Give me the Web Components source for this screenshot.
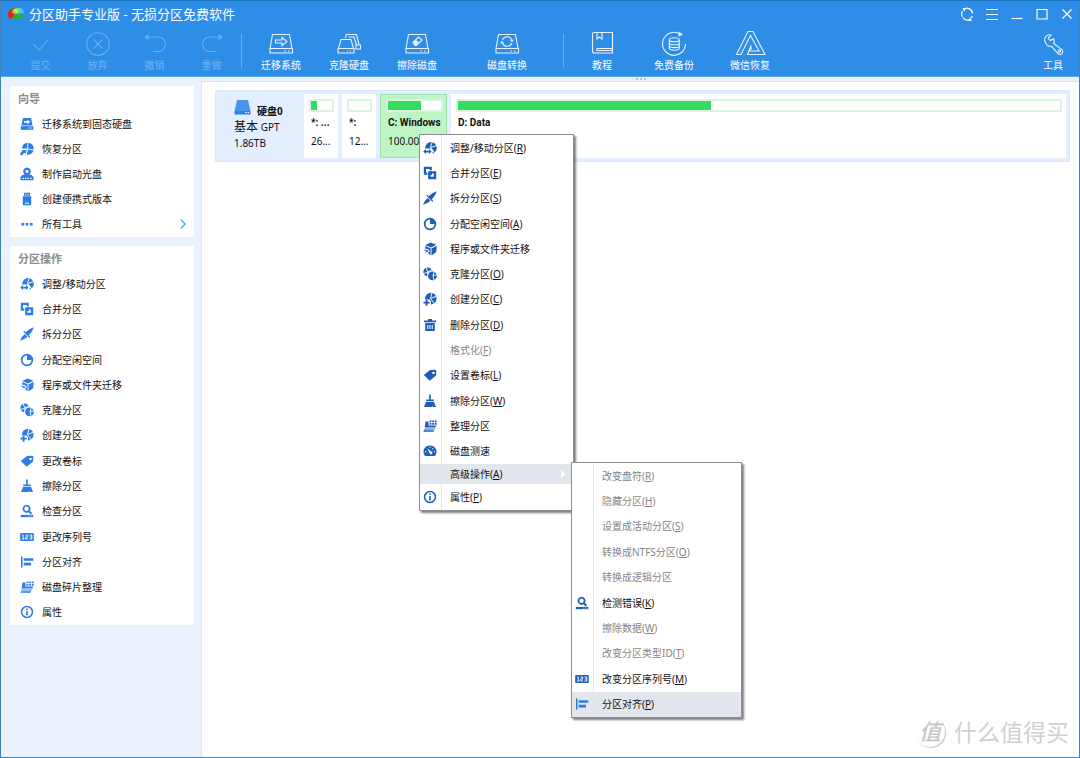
<!DOCTYPE html>
<html lang="zh-CN">
<head>
<meta charset="utf-8">
<title>分区助手专业版</title>
<style>
  html, body { margin: 0; height: 100%; }
  body { font: 10px/16px "Noto Sans", "Noto Sans CJK SC", sans-serif; color: #111; background: #fff; }
</style>
</head>
<body>

<app-window>
  <title-bar slot="header">分区助手专业版 - 无损分区免费软件</title-bar>
  <tool-bar slot="header">
    <tool-group>
      <tool-button icon="commit" dim>提交</tool-button>
      <tool-button icon="discard" dim>放弃</tool-button>
      <tool-button icon="undo" dim>撤销</tool-button>
      <tool-button icon="redo" dim>重做</tool-button>
    </tool-group>
    <tool-group wide>
      <tool-button icon="osmigrate">迁移系统</tool-button>
      <tool-button icon="diskclone">克隆硬盘</tool-button>
      <tool-button icon="diskwipe">擦除磁盘</tool-button>
      <tool-button icon="diskconvert" size="xl">磁盘转换</tool-button>
    </tool-group>
    <tool-group wider>
      <tool-button icon="book">教程</tool-button>
      <tool-button icon="backup">免费备份</tool-button>
      <tool-button icon="wechat" size="lg">微信恢复</tool-button>
    </tool-group>
    <tool-button slot="end" icon="wrench">工具</tool-button>
  </tool-bar>

  <side-card slot="side" heading="向导" size="short">
    <side-item icon="migrate">迁移系统到固态硬盘</side-item>
    <side-item icon="recover">恢复分区</side-item>
    <side-item icon="bootdisc">制作启动光盘</side-item>
    <side-item icon="portable">创建便携式版本</side-item>
    <side-item icon="dots" more>所有工具</side-item>
  </side-card>
  <side-card slot="side" heading="分区操作" size="tall">
    <side-item icon="resize">调整/移动分区</side-item>
    <side-item icon="merge">合并分区</side-item>
    <side-item icon="split">拆分分区</side-item>
    <side-item icon="alloc">分配空闲空间</side-item>
    <side-item icon="box">程序或文件夹迁移</side-item>
    <side-item icon="clone">克隆分区</side-item>
    <side-item icon="create">创建分区</side-item>
    <side-item icon="tag">更改卷标</side-item>
    <side-item icon="wipe">擦除分区</side-item>
    <side-item icon="check">检查分区</side-item>
    <side-item icon="serial">更改序列号</side-item>
    <side-item icon="align">分区对齐</side-item>
    <side-item icon="defrag">磁盘碎片整理</side-item>
    <side-item icon="info">属性</side-item>
  </side-card>

  <disk-row name="硬盘0" kind="基本" table="GPT" size="1.86TB">
    <disk-part used="30" size="26...">*: ...</disk-part>
    <disk-part used="0" size="12...">*:</disk-part>
    <disk-part used="62" size="100.00GB" selected>C: Windows</disk-part>
    <disk-part used="42" size="" grow>D: Data</disk-part>
  </disk-row>

  <pop-menu slot="overlay" id="context" aria-label="分区菜单">
    <menu-row icon="resize">调整/移动分区(<u>R</u>)</menu-row>
    <menu-row icon="merge">合并分区(<u>E</u>)</menu-row>
    <menu-row icon="split">拆分分区(<u>S</u>)</menu-row>
    <menu-row icon="alloc">分配空闲空间(<u>A</u>)</menu-row>
    <menu-row icon="box">程序或文件夹迁移</menu-row>
    <menu-row icon="clone">克隆分区(<u>O</u>)</menu-row>
    <menu-row icon="create">创建分区(<u>C</u>)</menu-row>
    <menu-row icon="trash">删除分区(<u>D</u>)</menu-row>
    <menu-row disabled>格式化(<u>F</u>)</menu-row>
    <menu-row icon="tag">设置卷标(<u>L</u>)</menu-row>
    <menu-row icon="wipe">擦除分区(<u>W</u>)</menu-row>
    <menu-row icon="defrag">整理分区</menu-row>
    <menu-row icon="gauge">磁盘测速</menu-row>
    <menu-row slot="foot" active sub>高级操作(<u>A</u>)</menu-row>
    <menu-row slot="foot" icon="info">属性(<u>P</u>)</menu-row>
  </pop-menu>
  <pop-menu slot="overlay" id="advanced" aria-label="高级操作">
    <menu-row disabled>改变盘符(<u>R</u>)</menu-row>
    <menu-row disabled>隐藏分区(<u>H</u>)</menu-row>
    <menu-row disabled>设置成活动分区(<u>S</u>)</menu-row>
    <menu-row disabled>转换成NTFS分区(<u>O</u>)</menu-row>
    <menu-row disabled>转换成逻辑分区</menu-row>
    <menu-row icon="check">检测错误(<u>K</u>)</menu-row>
    <menu-row disabled>擦除数据(<u>W</u>)</menu-row>
    <menu-row disabled>改变分区类型ID(<u>T</u>)</menu-row>
    <menu-row icon="serial">改变分区序列号(<u>M</u>)</menu-row>
    <menu-row icon="align" bright active>分区对齐(<u>P</u>)</menu-row>
  </pop-menu>
  <site-mark slot="overlay" badge="值">什么值得买</site-mark>
</app-window>

<script>
/* Filled 14px glyphs; class "k" knocks a shape out, class "l" cuts a line, both in the background colour. */
const SMALL = {
  migrate: '<path d="M3 1h8l1.6 7.4H1.4z"/><path d="M.7 9.200h12.600v3.600H.7z"/><path class="k" d="M4 4h3.200V2.600L10.400 5 7.200 7.200V5.800H4zM8.400 10.600h1.200v1H8.400zM10.600 10.600h1.200v1h-1.200z"/>',
  recover: '<circle cx="7.800" cy="6.800" r="6"/><path class="l" d="M7.800.5V7L14 8M7.800 7L6 13M7.800 7H1"/><path class="k" d="M0 6.800h6.500v6L5 14H0z"/><path d="M.5 13.200v-2.400l2.200-2L1.500 8h4.300v4.300l-1.400-1.600-1.800 1.800v.7z"/>',
  bootdisc: '<path fill-rule="evenodd" d="M7 .5a3.900 3.900 0 0 1 2.600 6.800L11 9H3l1.400-1.700A3.900 3.900 0 0 1 7 .5zm0 2.300a1.600 1.600 0 1 0 0 3.200 1.600 1.600 0 0 0 0-3.200z"/><path d="M2.200 8h9.600l1.700 2v3.300H.5V10z"/><path class="k" d="M2.500 10.800h1.400V12H2.500zM5 10.800h1.400V12H5zM7.600 10.800H9V12H7.600zM10.200 10.800h1.400V12h-1.400z"/>',
  portable: '<path d="M4 .8h6v3H4zM2.800 4.300h8.400v8q0 1-1 1H3.800q-1 0-1-1z"/><path class="k" d="M5.300 2h1v1h-1zM7.700 2h1v1h-1zM5 10.800h4v.9H5z"/>',
  dots: '<path d="M1.500 6h2.700v2.500H1.500zM5.700 6h2.700v2.500H5.700zM9.900 6h2.700v2.500H9.900z"/>',
  resize: '<circle cx="8" cy="6.800" r="5.800"/><path class="l" d="M7.500 6.500L9.300.5M7.500 6.500L13.500 4.800M7.500 6.500L12 12"/><path class="k" d="M0 7.500h8.800l1.500 3L8.500 14H0z"/><path d="M.2 10.600l2.700-2.500v1.700h3V8.100l2.700 2.500-2.700 2.500v-1.700h-3v1.700z"/>',
  merge: '<path fill-rule="evenodd" d="M.8.8h8v8h-8zM3 3v3.600h3.600V3z"/><path class="k" d="M4.300 4.300h5.300v1H5.300v4.300h-1z"/><path fill-rule="evenodd" d="M5.200 5.200h8v8h-8zM7.600 7.600v3.200h3.200V7.600z"/><path d="M6.600 6.600h2.200v2.200H6.600z"/>',
  split: '<path d="M13.900.3Q8.500 1.800 5.300 5.500l3.200 3.300Q12 5.500 13.900.3z"/><path d="M4.800 7l2.700 2.700Q4 12.800 0 13.700 1.500 9.500 4.800 7z"/><path d="M3.200 4.600l1.300-.5 5.600 5.700-.5 1.300z"/>',
  alloc: '<path fill-rule="evenodd" d="M7 .8a6.200 6.200 0 1 0 0 12.400A6.200 6.200 0 0 0 7 .8zm0 1.700V7h4.500A4.500 4.500 0 1 1 7 2.500z"/>',
  box: '<path d="M2.200 3L7.700.6l5.600 2.100L8 5.400zM8.500 6.400l5.200-2.700-.4 6.200-4.800 3.500zM7.600 6.300L2.200 4.100v2.700l2.900.3 1.700 2.500-2 1.400 2.800 2.200zM.2 7.700l4.200.2L5.700 10l-1.900-.3-1.700 1.900 1.100-2.300z"/>',
  clone: '<circle cx="4.800" cy="4.900" r="4.500"/><path class="l" d="M4.800 5.200L3 0M4.800 5.200L9 2.500M4.800 5.200L0 6.800M4.800 5.200L5 10"/><circle class="k" cx="9.400" cy="8.800" r="5.200"/><circle cx="9.500" cy="8.900" r="4.400"/><path class="l" d="M14 7.800L10 8.500 11.500 4M10 8.500L11 13.500"/>',
  create: '<circle cx="7.800" cy="6.600" r="5.800"/><path class="l" d="M7.500 6.500L9 .5M7.500 6.500L13.300 4.300M7.500 6.500L11.500 12"/><path class="k" d="M0 7.600h6.800l1.200 2V14H0z"/><path d="M2.600 7.700h1.900v2h2.200v1.800H4.500v2.200H2.600v-2.200H.4V9.700h2.200z"/>',
  tag: '<path fill-rule="evenodd" d="M7 2l5-.2q1.500 0 1.400 1.500L13 7.500l-6.300 5.300L.8 7.100zm3.500 1.700a1.200 1.200 0 1 0 0 2.400 1.200 1.200 0 0 0 0-2.400z"/>',
  wipe: '<path d="M6.200.5h1.600v5h3v1.700H3.200V5.500h3zM3 8h8l2 5H9.600l-.4-1.600-.4 1.600H1z"/>',
  check: '<path fill-rule="evenodd" d="M6.500.8a4 4 0 0 1 3.400 6.100l2.300 2.200-1.500 1.300L8.500 8.300A4 4 0 1 1 6.500.8zm0 1.800a2.200 2.200 0 1 0 0 4.400 2.200 2.200 0 0 0 0-4.400z"/><path d="M.8 10.900h12.400v2.300H.8z"/><path class="k" d="M8.300 11.700h1v.8h-1zM10.500 11.700h1v.8h-1z"/>',
  serial: '<path d="M1.200 3h11.600q1 0 1 1v6q0 1-1 1H1.200q-1 0-1-1V4q0-1 1-1z"/><path class="l" d="M2 5h1.200v4M2 9h2.400M5.500 5h2.200v2H5.700v2h2.300M9.500 5h2.300v4H9.500M9.700 7h2"/>',
  align: '<path d="M1 1.500h1.500v11H1zM3.700 3.200h9.600v2.500H3.700zM3.700 7.800H11v2.600H3.700z"/>',
  defrag: '<path d="M2.500 2.500h3v4H13l-.4 2H1.700zM1.500 9.400h10.800l-.6 1.100H1.100zM.8 11.200h10.300l-.6 1.500H.4zM6.500 1.500h1.900v1.700H6.500zM9.200 1.500h1.900v1.700H9.200zM11.900 1.500h1.800v1.700h-1.800zM6.500 4h1.900v1.700H6.500zM9.200 4h1.900v1.700H9.200zM11.900 4h1.800v1.700h-1.800z"/>',
  info: '<path fill-rule="evenodd" d="M7 .8a6.200 6.200 0 1 0 0 12.400A6.200 6.200 0 0 0 7 .8zm0 1.500a4.700 4.700 0 1 1 0 9.400 4.700 4.700 0 0 1 0-9.400z"/><path d="M6.200 3.500h1.600V5H6.200zM6.200 5.900h1.600v4.600H6.200z"/>',
  trash: '<path fill-rule="evenodd" d="M5 1h4v1.500h4v1.700H1V2.500h4zM2.200 5h9.600v8H2.200zm2.100 2v4h1V7zm2.200 0v4h1V7zm2.200 0v4h1V7z"/>',
  gauge: '<path d="M7 1.500a6.300 6.300 0 0 1 5.600 9.500q-.4 1-1.200 1H2.600q-.8 0-1.200-1A6.300 6.300 0 0 1 7 1.500z"/><path class="k" d="M4.200 4.200l4.300 3.600a1.300 1.300 0 1 1-1.700 1.500zM2 7.200h1.300v1H2zM10.700 7.200H12v1h-1.300zM6.600 2.800h.9V4h-.9zM9.800 4l.8.7-.9.900-.6-.7z"/>'
};
/* Outlined 26px glyphs of the toolbar. */
const HD = '<path d="M4.500 3.500h17l2.500 14H2zM2 17.500h22.500v4.500H2zM16.500 20h1.500M20 20h1.500"/>';
const LARGE = {
  commit: '<path d="M5 13l6 6L20.500 8.500"/>',
  discard: '<circle cx="13" cy="13" r="11.300"/><path d="M8.500 8.500l9 9M17.500 8.500l-9 9"/>',
  undo: '<path d="M4 6h13a7.300 7.300 0 0 1 0 14.500h-6"/><path class="f" d="M2 6l4.500-3v6z"/>',
  redo: '<path d="M22 6H10a7.300 7.300 0 0 0 0 14.500h6.500"/><path class="f" d="M24 6l-4.500-3v6z"/>',
  osmigrate: HD + '<path d="M7.500 9h6.500V6.500l5 4-5 4V12H7.500z"/>',
  diskclone: '<path d="M9.500 7l.8-3.500H20.500l2.500 10M5 8.500h10l2.500 9H2.500zM2 17.500h16v4.500H2zM11 20h1M14 20h1M20 14h4.500v4H20zM12.500 6h5.500l2.500 8"/>',
  diskwipe: HD + '<path d="M9 11.500l5.500-5.500 3.500 3-5.500 5.500h-1.500z"/><path class="f" d="M9.300 11.500l2.700-2.700 3.200 2.900-2.700 2.800h-1.500z"/>',
  diskconvert: HD + '<path d="M8.500 9a5 5 0 0 1 9.300-.2M17.800 12a5 5 0 0 1-9.300.2"/><path class="f" d="M19.800 8.500l-1.700 2.800-2-2.200zM6.200 12.500l1.700-2.800L10 12z"/>',
  book: '<path d="M5 1.500h18.500v20.500H5.500q-2 0-2-2V3q0-1.500 1.500-1.500zM8 1.500v6.500l2.500-2 2.500 2V1.500M23.500 17.500H9q-1.500 0-1.500 1t1.500 1h14.500"/>',
  backup: '<path d="M19 3A11.500 11.500 0 1 0 24.500 13"/><path class="f" d="M17.500.5l4.500 3-4.500 2.200z"/><path d="M8.300 9v8c0 3 10 3 10 0V9M8.300 11.700c0 2.800 10 2.800 10 0M8.300 14.500c0 2.800 10 2.800 10 0"/><ellipse cx="13.300" cy="8.800" rx="5" ry="2"/>',
  wechat: '<path d="M-.5 23.500L11 .5h5L28 23.500H10.500l3.500-9v3.500h-1l-.5 2h9.500L13.500 4.500 4 23.500z"/>',
  wrench: '<path d="M5 10.500C3.500 6 7.500 2.800 11 4L8.200 7.300l2 2.300 3.500-1.900c.9 2.200.5 3.700 0 4.800l7.400 5.600a2.800 2.800 0 1 1-3.700 3.700L11.500 15.300C8.500 15.800 5.900 13.500 5 10.500z"/><circle cx="19.600" cy="20" r="1.100"/>'
};

function define(name, html, setup) {
  const tpl = document.createElement('template');
  tpl.innerHTML = html;
  customElements.define(name, class extends HTMLElement {
    constructor() {
      super();
      this.attachShadow({ mode: 'open' }).append(tpl.content.cloneNode(true));
    }
    connectedCallback() {
      if (setup) setup(this, s => this.shadowRoot.querySelector(s));
    }
  });
}

define('glyph-icon', `
  <style>
    :host { display: block; flex: none; width: 14px; height: 14px; }
    :host([large]) { width: 26px; height: 26px; }
    svg { display: block; width: 100%; height: 100%; overflow: visible; fill: currentColor; }
    .k { fill: #fff; }
    .l { fill: none; stroke: #fff; stroke-width: .9; }
    :host([large]) svg { fill: none; stroke: currentColor; stroke-width: 1.1; opacity: .9; }
    :host([large]) .f { fill: currentColor; stroke: none; }
  </style><svg aria-hidden="true"></svg>`, (el, $) => {
    const large = el.hasAttribute('large'), name = el.getAttribute('name');
    $('svg').setAttribute('viewBox', large ? '0 0 26 26' : '0 0 14 14');
    $('svg').innerHTML = (large ? LARGE : SMALL)[name] || '';
  });

define('app-window', `
  <style>
    :host { display: flex; flex-direction: column; position: relative; min-height: 100%; box-sizing: border-box;
      border: 1px solid #3e83bd; border-top-color: #1873c0; background: #fff; }
    header { background: #2e8de7; border-bottom: 1px solid #58a5ee; color: #fff; }
    .body { display: flex; flex: 1; }
    aside { display: flex; flex-direction: column; gap: 9px; flex: none; width: 201px; box-sizing: border-box;
      padding: 9px 7px 9px 9px; background: #eaf2ff; border-right: 1px solid #dde6f2; }
    main { flex: 1; min-width: 0; }
    .grip { display: flex; justify-content: center; gap: 2px; height: 4px; background: #ebf1fa; border-bottom: 1px solid #dce3ee; }
    .grip i { width: 2px; height: 2px; margin-top: 1px; background: #b5bdc9; }
    .rows { padding: 8px 9px 8px 13px; }
  </style>
  <header><slot name="header"></slot></header>
  <div class="body">
    <aside><slot name="side"></slot></aside>
    <main><div class="grip"><i></i><i></i><i></i></div><div class="rows"><slot></slot></div></main>
  </div>
  <slot name="overlay"></slot>`);

define('title-bar', `
  <style>
    :host { display: flex; align-items: center; height: 25px; padding: 0 0 0 6px; }
    .logo { width: 18px; height: 14px; margin-right: 4px; }
    h1 { flex: 1; margin: 0; font: inherit; font-size: 13px; line-height: 20px; white-space: nowrap; }
    button { width: 25px; height: 24px; padding: 0; border: 0; background: none; color: inherit; display: grid; place-items: center; }
    button svg { width: 14px; height: 14px; fill: none; stroke: currentColor; stroke-width: 1.2; }
    .f { fill: currentColor; stroke: none; }
  </style>
  <svg class="logo" viewBox="0 0 18 14" aria-hidden="true">
    <path d="M1 6Q3 1 9 1l-1 6-4 5Q0 10 1 6z" fill="#e2201c"/><path d="M7 2q9-4 10 4l-7 1z" fill="#43c6f4"/>
    <path d="M17 7q-1 7-9 6-3-.5-3-1l4-5z" fill="#22b04b"/><path d="M6 2l5-1 2 3-4 3-4-1z" fill="#a7dc45"/><path d="M8 3l2 2" stroke="#fff" fill="none"/>
  </svg>
  <h1><slot></slot></h1>
  <button aria-label="刷新"><svg viewBox="0 0 14 14"><path d="M3.500 2.500A5.300 5.300 0 0 1 12.300 6.500M1.700 6.500A5.300 5.300 0 0 0 2.500 9.800M12.300 9A5.300 5.300 0 0 1 11 11.200M9.500 12.700A5.300 5.300 0 0 1 3 10.500M1.700 7A5.300 5.300 0 0 1 2.500 4"/><path class="f" d="M2.500 1h4L4 4.500zM11.800 14h-4l2.500-3.500z"/></svg></button>
  <button aria-label="菜单"><svg viewBox="0 0 14 14"><path d="M1 2.500h12M1 7.500h12M1 12.500h12"/></svg></button>
  <button aria-label="最小化"><svg viewBox="0 0 14 14"><path d="M1.500 11.500h11"/></svg></button>
  <button aria-label="最大化"><svg viewBox="0 0 14 14"><path d="M2 2.500h10v9.500H2z"/></svg></button>
  <button aria-label="关闭"><svg viewBox="0 0 14 14"><path d="M2.500 2.500l9 9M11.500 2.500l-9 9"/></svg></button>`);

define('tool-bar', `
  <style>
    :host { display: flex; align-items: flex-start; height: 45px; padding: 5px 0 0 11px; }
    .end { margin-left: auto; }
  </style><slot></slot><div class="end"><slot name="end"></slot></div>`);

define('tool-group', `
  <style>
    :host { display: flex; align-items: flex-start; --w: 57px; }
    :host([wide]) { --w: 68px; }
    :host([wider]) { --w: 72px; }
    :host([wide])::before, :host([wider])::before { content: ""; width: 1px; height: 34px; margin-top: 3px; background: #63adf1; }
    :host([wide])::before { margin-left: 1px; margin-right: 5px; }
    :host([wider])::before { margin-right: 2px; }
  </style><slot></slot>`);

define('tool-button', `
  <style>
    :host { display: block; width: var(--w, 52px); }
    :host([size="lg"]) { width: 80px; }
    :host([size="xl"]) { width: 112px; }
    button { display: flex; flex-direction: column; align-items: center; width: 100%; padding: 0; border: 0; background: none;
      font: inherit; line-height: 14px; color: #fff; white-space: nowrap; }
    :host([dim]) button { color: #6db2f2; }
    span { margin-top: 1px; }
  </style><button><glyph-icon large></glyph-icon><span><slot></slot></span></button>`,
  (el, $) => {
    const old = $('glyph-icon'), g = document.createElement('glyph-icon');
    g.setAttribute('large', ''); g.setAttribute('name', el.getAttribute('icon')); old.replaceWith(g);
  });

define('side-card', `
  <style>
    :host { display: grid; grid-auto-rows: 1fr; background: #fff; min-height: 151px; }
    :host([size="tall"]) { min-height: 379px; }
    h2 { margin: 0; padding-left: 8px; align-self: center; font: inherit; font-size: 11px; line-height: 16px; color: #8c8c8c; font-weight: 700; }
  </style><h2></h2><slot></slot>`, (el, $) => { $('h2').textContent = el.getAttribute('heading'); });

define('side-item', `
  <style>
    :host { display: grid; }
    button { display: flex; align-items: center; gap: 8px; padding: 0 8px 0 10px; border: 0; background: none; font: inherit; color: #111; text-align: left; }
    .icon { color: #2b7ce6; }
    .more { display: none; width: 6px; height: 10px; margin-left: auto; fill: none; stroke: #4aa3f5; stroke-width: 1.4; }
    :host([more]) .more { display: block; }
  </style>
  <button><span class="icon"></span><span><slot></slot></span>
    <svg class="more" viewBox="0 0 6 10" aria-hidden="true"><path d="M1 .8L5 5 1 9.200"/></svg></button>`,
  (el, $) => { $('.icon').innerHTML = `<glyph-icon name="${el.getAttribute('icon')}"></glyph-icon>`; });

define('disk-row', `
  <style>
    :host { display: flex; gap: 4px; padding: 3px; background: #e3eeff; border: 1px solid #d9e7fb; }
    .info { flex: none; width: 66px; padding: 5px 0 0 15px; }
    .head { display: flex; align-items: flex-end; gap: 6px; height: 20px; font-weight: 700; }
    svg { width: 17px; height: 16px; margin-bottom: 4px; }
    .line { line-height: 16px; white-space: nowrap; }
    .kind { font-size: 12px; }
  </style>
  <div class="info">
    <div class="head">
      <svg viewBox="0 0 17 16" aria-hidden="true"><path d="M3 1h11l2.500 11H.5z" fill="#4a94f0"/><path d="M.5 12h16v3.500H.5z" fill="#2f7fe6"/><path d="M11 13.500h1.500M13.500 13.500H15" stroke="#fff"/></svg>
      <span class="name"></span>
    </div>
    <div class="line"><span class="kind"></span> <span class="table"></span></div>
    <div class="line size"></div>
  </div>
  <slot></slot>`, (el, $) => {
    for (const k of ['name', 'kind', 'table', 'size']) $('.' + k).textContent = el.getAttribute(k);
  });

define('disk-part', `
  <style>
    :host { display: block; flex: none; width: 34px; height: 64px; box-sizing: border-box; padding: 5px 4px 0 5px; background: #fff; overflow: hidden; }
    :host([selected]) { width: 67px; background: #bff5c6; border: 1px solid #9fe0aa; padding-top: 4px; padding-right: 3px; }
    :host([grow]) { flex: 1; }
    .bar { height: 13px; box-sizing: border-box; border: 2px solid #dcf3e2; background: #fff; margin-bottom: 2px; }
    .fill { height: 100%; background: #37dc5f; }
    .name, .size { line-height: 18px; padding-left: 2px; white-space: nowrap; }
    .name { font-weight: 700; font-family: Roboto, "Noto Sans CJK SC", sans-serif; }
  </style>
  <div class="bar" role="meter" aria-valuemin="0" aria-valuemax="100"><div class="fill"></div></div>
  <div class="name"><slot></slot></div><div class="size"></div>`, (el, $) => {
    const used = el.getAttribute('used');
    $('.bar').setAttribute('aria-valuenow', used);
    $('.bar').setAttribute('aria-label', '已用空间');
    $('.fill').style.width = used + '%';
    $('.size').textContent = el.getAttribute('size');
  });

define('pop-menu', `
  <style>
    :host { position: absolute; box-sizing: border-box; background: #fff; border: 1px solid #8f8f8f; box-shadow: 2px 2px 2px rgba(0,0,0,.5); }
    :host(#context) { left: 418px; top: 133px; width: 155px; --list: 329px; }
    :host(#advanced) { left: 570px; top: 461px; width: 171px; --list: 254px; }
    .list { display: grid; grid-auto-rows: 1fr; min-height: var(--list); }
    .foot { display: grid; grid-template-rows: 20px 26px; }
    :host(#advanced) .foot { display: none; }
  </style>
  <div class="list"><slot></slot></div><div class="foot"><slot name="foot"></slot></div>`,
  el => { el.setAttribute('role', 'menu'); });

define('menu-row', `
  <style>
    :host { display: grid; }
    button { display: flex; align-items: stretch; padding: 0; border: 0; background: none; font: inherit; color: #111; text-align: left; }
    .icon { display: grid; place-content: center start; flex: none; width: 22px; box-sizing: border-box; padding-left: 3px; border-right: 1px solid #e3e7ec; color: #1f5fb8; margin-right: 8px; }
    .text { align-self: center; flex: 1; white-space: nowrap; }
    :host([disabled]) button { color: #858585; }
    :host([active]) button { background: #e2e7ee; }
    :host([active]) .icon { border-color: transparent; }
    :host([bright]) .icon { color: #2b7ce6; }
    .sub { display: none; align-self: center; margin-right: 7px; width: 5px; height: 8px; fill: #fff; }
    :host([sub]) .sub { display: block; }
  </style>
  <button role="menuitem"><span class="icon"></span><span class="text"><slot></slot></span>
    <svg class="sub" viewBox="0 0 5 8" aria-hidden="true"><path d="M0 0l5 4-5 4z"/></svg></button>`,
  (el, $) => {
    $('button').disabled = el.hasAttribute('disabled');
    if (el.hasAttribute('icon')) $('.icon').innerHTML = `<glyph-icon name="${el.getAttribute('icon')}"></glyph-icon>`;
  });

define('site-mark', `
  <style>
    :host { position: absolute; right: 10px; bottom: 9px; display: flex; align-items: center; gap: 9px; color: #d0d0d0; font-size: 23px; line-height: 32px; }
    b { width: 30px; height: 30px; border-radius: 50%; box-shadow: 1px 1px 1px #c4c4c4; text-align: center; font-size: 22px; line-height: 28px; font-style: italic; font-weight: 500; color: #c8c8c8; }
  </style><b></b><span><slot></slot></span>`, (el, $) => { $('b').textContent = el.getAttribute('badge'); });
</script>
</body>
</html>
